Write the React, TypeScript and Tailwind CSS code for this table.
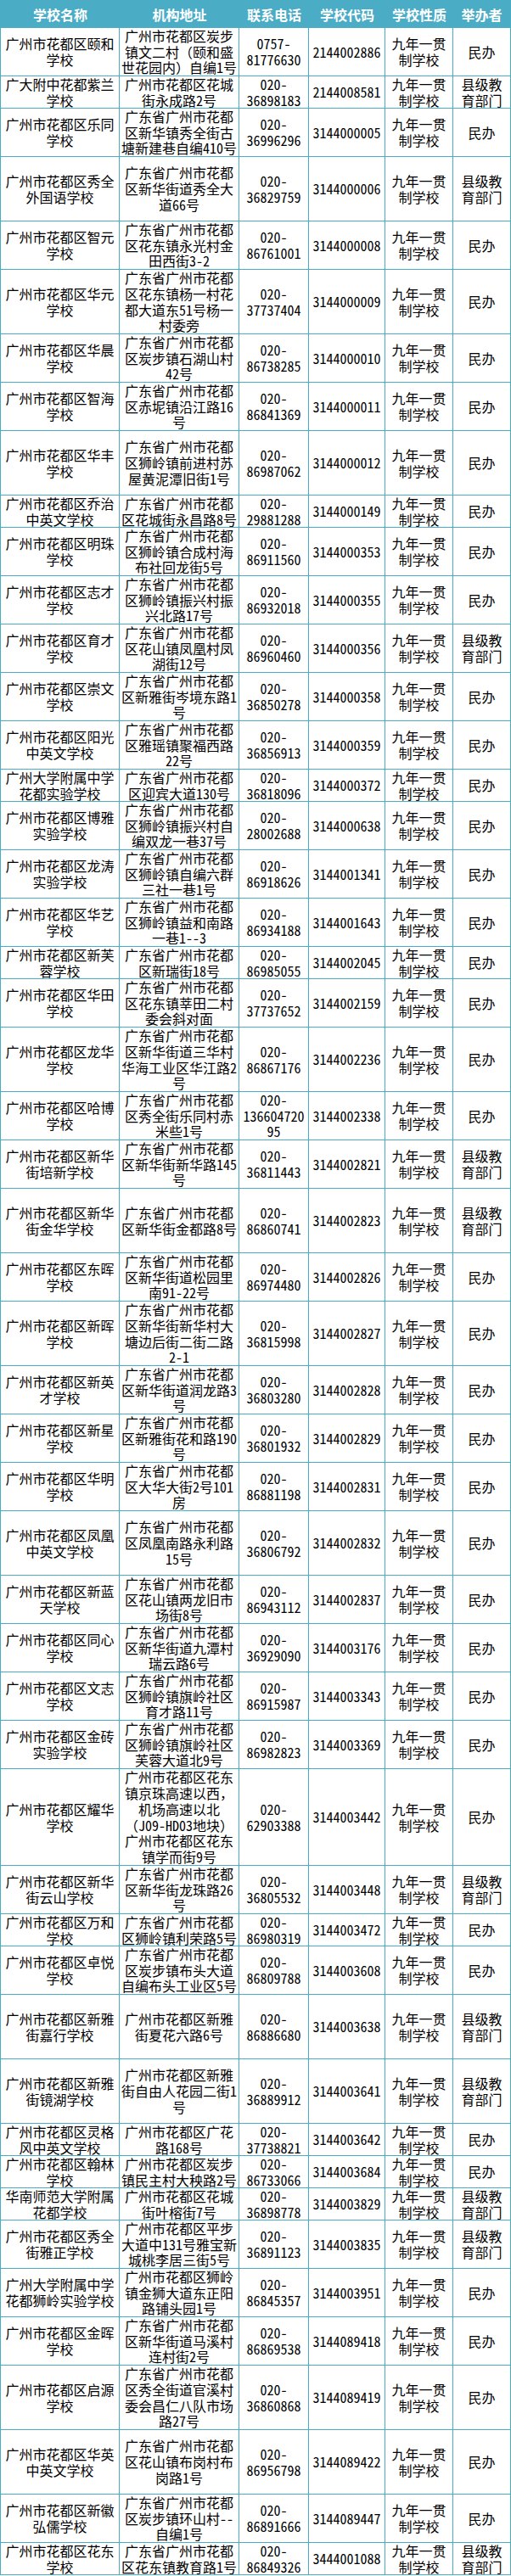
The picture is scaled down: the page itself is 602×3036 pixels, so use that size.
const columns = [
  { title: '学校名称', width: 'w-[140px]' },
  { title: '机构地址', width: 'w-[141px]' },
  { title: '联系电话', width: 'w-[82px]' },
  { title: '学校代码', width: 'w-[90px]' },
  { title: '学校性质', width: 'w-[80px]' },
  { title: '举办者', width: 'w-[67px]' },
];

const heightClass: Record<number, string> = {
  38: 'h-[38px]',
  57: 'h-[57px]',
  76: 'h-[76px]',
  114: 'h-[114px]',
};

const sponsorText = {
  m: '民办',
  x: '县级教\n育部门',
};

type School = [string, string, string, string, 'm' | 'x', number];

// name, address, phone, code, sponsor, row height
const schools: School[] = [
  ['广州市花都区颐和\n学校', '广州市花都区炭步\n镇文二村（颐和盛\n世花园内）自编1号', '0757-\n81776630', '2144002886', 'm', 57],
  ['广大附中花都紫兰\n学校', '广州市花都区花城\n街永成路2号', '020-\n36898183', '2144008581', 'x', 38],
  ['广州市花都区乐同\n学校', '广东省广州市花都\n区新华镇秀全街古\n塘新建巷自编410号', '020-\n36996296', '3144000005', 'm', 57],
  ['广州市花都区秀全\n外国语学校', '广东省广州市花都\n区新华街道秀全大\n道66号', '020-\n36829759', '3144000006', 'x', 76],
  ['广州市花都区智元\n学校', '广东省广州市花都\n区花东镇永光村金\n田西街3-2', '020-\n86761001', '3144000008', 'm', 57],
  ['广州市花都区华元\n学校', '广东省广州市花都\n区花东镇杨一村花\n都大道东51号杨一\n村委旁', '020-\n37737404', '3144000009', 'm', 76],
  ['广州市花都区华晨\n学校', '广东省广州市花都\n区炭步镇石湖山村\n42号', '020-\n86738285', '3144000010', 'm', 57],
  ['广州市花都区智海\n学校', '广东省广州市花都\n区赤坭镇沿江路16\n号', '020-\n86841369', '3144000011', 'm', 57],
  ['广州市花都区华丰\n学校', '广东省广州市花都\n区狮岭镇前进村苏\n屋黄泥潭旧街1号', '020-\n86987062', '3144000012', 'm', 76],
  ['广州市花都区乔治\n中英文学校', '广东省广州市花都\n区花城街永昌路8号', '020-\n29881288', '3144000149', 'm', 38],
  ['广州市花都区明珠\n学校', '广东省广州市花都\n区狮岭镇合成村海\n布社回龙街5号', '020-\n86911560', '3144000353', 'm', 57],
  ['广州市花都区志才\n学校', '广东省广州市花都\n区狮岭镇振兴村振\n兴北路17号', '020-\n86932018', '3144000355', 'm', 57],
  ['广州市花都区育才\n学校', '广东省广州市花都\n区花山镇凤凰村凤\n湖街12号', '020-\n86960460', '3144000356', 'x', 57],
  ['广州市花都区崇文\n学校', '广东省广州市花都\n区新雅街岑境东路1\n号', '020-\n36850278', '3144000358', 'm', 57],
  ['广州市花都区阳光\n中英文学校', '广东省广州市花都\n区雅瑶镇聚福西路\n22号', '020-\n36856913', '3144000359', 'm', 57],
  ['广州大学附属中学\n花都实验学校', '广东省广州市花都\n区迎宾大道130号', '020-\n36818096', '3144000372', 'm', 38],
  ['广州市花都区博雅\n实验学校', '广东省广州市花都\n区狮岭镇振兴村自\n编双龙一巷37号', '020-\n28002688', '3144000638', 'm', 57],
  ['广州市花都区龙涛\n实验学校', '广东省广州市花都\n区狮岭镇自编六群\n三社一巷1号', '020-\n86918626', '3144001341', 'm', 57],
  ['广州市花都区华艺\n学校', '广东省广州市花都\n区狮岭镇益和南路\n一巷1--3', '020-\n86934188', '3144001643', 'm', 57],
  ['广州市花都区新芙\n蓉学校', '广东省广州市花都\n区新瑞街18号', '020-\n86985055', '3144002045', 'm', 38],
  ['广州市花都区华田\n学校', '广东省广州市花都\n区花东镇莘田二村\n委会斜对面', '020-\n37737652', '3144002159', 'm', 57],
  ['广州市花都区龙华\n学校', '广东省广州市花都\n区新华街道三华村\n华海工业区华江路2\n号', '020-\n86867176', '3144002236', 'm', 76],
  ['广州市花都区哈博\n学校', '广东省广州市花都\n区秀全街乐同村赤\n米些1号', '020-\n136604720\n95', '3144002338', 'm', 57],
  ['广州市花都区新华\n街培新学校', '广东省广州市花都\n区新华街新华路145\n号', '020-\n36811443', '3144002821', 'x', 57],
  ['广州市花都区新华\n街金华学校', '广东省广州市花都\n区新华街金都路8号', '020-\n86860741', '3144002823', 'x', 76],
  ['广州市花都区东晖\n学校', '广东省广州市花都\n区新华街道松园里\n南91-22号', '020-\n86974480', '3144002826', 'm', 57],
  ['广州市花都区新晖\n学校', '广东省广州市花都\n区新华街新华村大\n塘边后街二街二路\n2-1', '020-\n36815998', '3144002827', 'm', 76],
  ['广州市花都区新英\n才学校', '广东省广州市花都\n区新华街道润龙路3\n号', '020-\n36803280', '3144002828', 'm', 57],
  ['广州市花都区新星\n学校', '广东省广州市花都\n区新雅街花和路190\n号', '020-\n36801932', '3144002829', 'm', 57],
  ['广州市花都区华明\n学校', '广东省广州市花都\n区大华大街2号101\n房', '020-\n86881198', '3144002831', 'm', 57],
  ['广州市花都区凤凰\n中英文学校', '广东省广州市花都\n区凤凰南路永利路\n15号', '020-\n36806792', '3144002832', 'm', 76],
  ['广州市花都区新蓝\n天学校', '广东省广州市花都\n区花山镇两龙旧市\n场街8号', '020-\n86943112', '3144002837', 'm', 57],
  ['广州市花都区同心\n学校', '广东省广州市花都\n区新华街道九潭村\n瑞云路6号', '020-\n36929090', '3144003176', 'm', 57],
  ['广州市花都区文志\n学校', '广东省广州市花都\n区狮岭镇旗岭社区\n育才路11号', '020-\n86915987', '3144003343', 'm', 57],
  ['广州市花都区金砖\n实验学校', '广东省广州市花都\n区狮岭镇旗岭社区\n芙蓉大道北9号', '020-\n86982823', '3144003369', 'm', 57],
  ['广州市花都区耀华\n学校', '广州市花都区花东\n镇京珠高速以西，\n机场高速以北\n（J09-HD03地块）\n广州市花都区花东\n镇学而街9号', '020-\n62903388', '3144003442', 'm', 114],
  ['广州市花都区新华\n街云山学校', '广东省广州市花都\n区新华街龙珠路26\n号', '020-\n36805532', '3144003448', 'x', 57],
  ['广州市花都区万和\n学校', '广东省广州市花都\n区狮岭镇利荣路5号', '020-\n86980319', '3144003472', 'm', 38],
  ['广州市花都区卓悦\n学校', '广东省广州市花都\n区炭步镇布头大道\n自编布头工业区5号', '020-\n86809788', '3144003608', 'm', 57],
  ['广州市花都区新雅\n街嘉行学校', '广州市花都区新雅\n街夏花六路6号', '020-\n86886680', '3144003638', 'x', 76],
  ['广州市花都区新雅\n街镜湖学校', '广州市花都区新雅\n街自由人花园二街1\n号', '020-\n36889912', '3144003641', 'x', 76],
  ['广州市花都区灵格\n风中英文学校', '广州市花都区广花\n路168号', '020-\n37738821', '3144003642', 'm', 38],
  ['广州市花都区翰林\n学校', '广州市花都区炭步\n镇民主村大秧路2号', '020-\n86733066', '3144003684', 'm', 38],
  ['华南师范大学附属\n花都学校', '广州市花都区花城\n街叶榕街7号', '020-\n36898778', '3144003829', 'x', 38],
  ['广州市花都区秀全\n街雅正学校', '广州市花都区平步\n大道中131号雅宝新\n城桃李居三街5号', '020-\n36891123', '3144003835', 'x', 57],
  ['广州大学附属中学\n花都狮岭实验学校', '广州市花都区狮岭\n镇金狮大道东正阳\n路铺头园1号', '020-\n86845357', '3144003951', 'm', 57],
  ['广州市花都区金晖\n学校', '广东省广州市花都\n区新华街道马溪村\n连村街2号', '020-\n86869538', '3144089418', 'm', 57],
  ['广州市花都区启源\n学校', '广东省广州市花都\n区秀全街道官溪村\n委会昌仁八队市场\n路27号', '020-\n36860868', '3144089419', 'm', 76],
  ['广州市花都区华英\n中英文学校', '广东省广州市花都\n区花山镇布岗村布\n岗路1号', '020-\n86956798', '3144089422', 'm', 76],
  ['广州市花都区新徽\n弘儒学校', '广东省广州市花都\n区炭步镇环山村--\n自编1号', '020-\n86891666', '3144089447', 'm', 57],
  ['广州市花都区花东\n学校', '广东省广州市花都\n区花东镇教育路1号', '020-\n86849326', '3444001088', 'x', 38],
];

function Cell({ width, last, children }: { width: string; last?: boolean; children: string }) {
  return (
    <div
      className={`${width} shrink-0 h-full flex items-center justify-center text-center whitespace-pre leading-[18.67px] ${
        last ? '' : 'border-r border-[#4bacc6]'
      }`}
    >
      {children}
    </div>
  );
}

export default function App() {
  return (
    <div
      className="w-[602px] bg-white text-black text-[16px]"
      style={{ fontFamily: '"Noto Sans Mono CJK SC", "Noto Sans CJK SC", sans-serif' }}
    >
      <div className="flex h-[33px] bg-[#4bacc6] text-white font-bold border-x border-[#4bacc6]">
        {columns.map((col) => (
          <div key={col.title} className={`${col.width} shrink-0 flex items-center justify-center leading-[20px]`}>
            {col.title}
          </div>
        ))}
      </div>
      <div className="border-x border-[#4bacc6]">
        {schools.map(([name, addr, phone, code, sponsor, h]) => (
          <div key={code} className={`flex box-border border-b border-[#4bacc6] ${heightClass[h]}`}>
            <Cell width="w-[140px]">{name}</Cell>
            <Cell width="w-[141px]">{addr}</Cell>
            <Cell width="w-[82px]">{phone}</Cell>
            <Cell width="w-[90px]">{code}</Cell>
            <Cell width="w-[80px]">{'九年一贯\n制学校'}</Cell>
            <Cell width="w-[67px]" last>
              {sponsorText[sponsor]}
            </Cell>
          </div>
        ))}
      </div>
    </div>
  );
}
